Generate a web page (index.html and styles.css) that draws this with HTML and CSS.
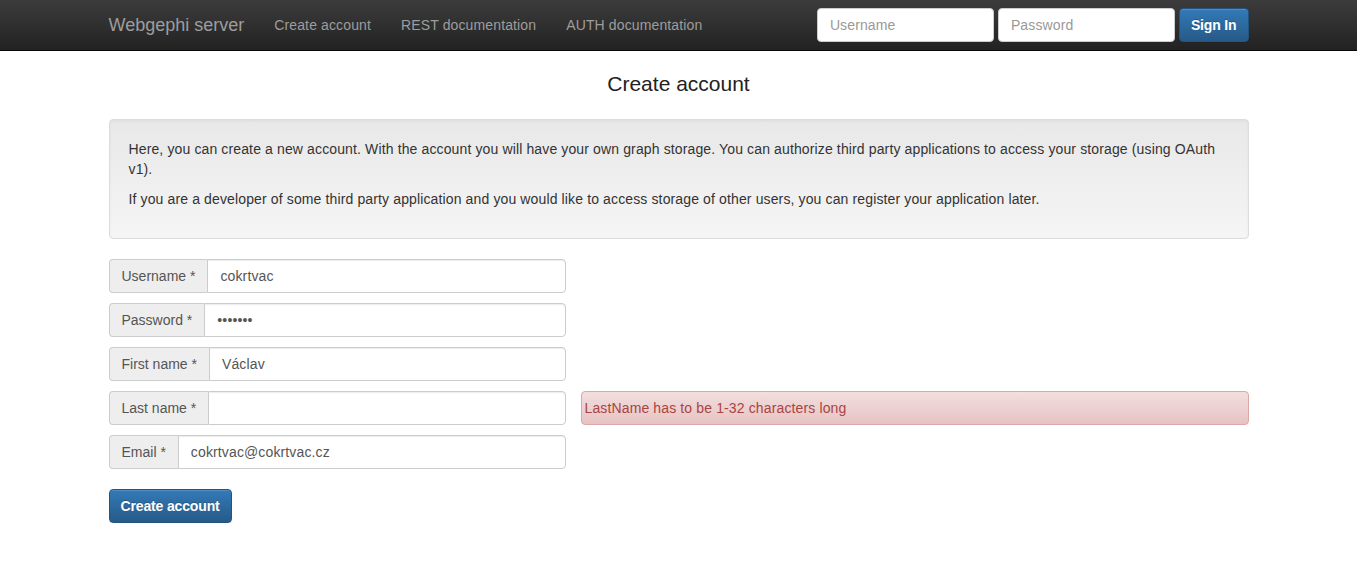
FILE: index.html
```html
<!DOCTYPE html>
<html lang="en">
<head>
<meta charset="utf-8">
<title>Create account - Webgephi server</title>
<link rel="stylesheet" href="styles.css">
</head>
<body>
<nav class="navbar">
  <div class="container nav-inner">
    <a class="brand" href="#">Webgephi server</a>
    <ul class="nav-links">
      <li><a href="#">Create account</a></li>
      <li><a href="#">REST documentation</a></li>
      <li><a href="#">AUTH documentation</a></li>
    </ul>
    <form class="nav-form">
      <input class="nav-input" type="text" placeholder="Username">
      <input class="nav-input" type="password" placeholder="Password">
      <button class="btn btn-primary" type="button">Sign In</button>
    </form>
  </div>
</nav>
<main class="container">
  <h3 class="page-title">Create account</h3>
  <div class="well">
    <p>Here, you can create a new account. With the account you will have your own graph storage. You can authorize third party applications to access your storage (using OAuth v1).</p>
    <p>If you are a developer of some third party application and you would like to access storage of other users, you can register your application later.</p>
  </div>
  <form class="signup">
    <div class="row">
      <div class="input-group">
        <span class="addon">Username *</span>
        <input class="field" type="text" value="cokrtvac">
      </div>
    </div>
    <div class="row">
      <div class="input-group">
        <span class="addon">Password *</span>
        <input class="field" type="password" value="abcdefg">
      </div>
    </div>
    <div class="row">
      <div class="input-group">
        <span class="addon">First name *</span>
        <input class="field" type="text" value="Václav">
      </div>
    </div>
    <div class="row">
      <div class="input-group">
        <span class="addon">Last name *</span>
        <input class="field" type="text" value="">
      </div>
      <div class="alert-danger">LastName has to be 1-32 characters long</div>
    </div>
    <div class="row">
      <div class="input-group">
        <span class="addon">Email *</span>
        <input class="field" type="text" value="cokrtvac@cokrtvac.cz">
      </div>
    </div>
    <div class="actions">
      <button class="btn btn-primary btn-create" type="button">Create account</button>
    </div>
  </form>
</main>
</body>
</html>
```
FILE: styles.css
```css
* { box-sizing: border-box; }
html, body { margin: 0; padding: 0; }
body {
  font-family: "Liberation Sans", Arial, Helvetica, sans-serif;
  font-size: 14px;
  line-height: 20px;
  letter-spacing: 0.13px;
  color: #333;
  background: #fff;
}
.container {
  width: 1170px;
  margin: 0 auto;
  padding: 0 15px;
}
.navbar {
  height: 51px;
  background: linear-gradient(to bottom, #3c3c3c 0, #222 100%);
  border-bottom: 1px solid #080808;
}
.nav-inner {
  display: flex;
  align-items: center;
  height: 50px;
}
.brand {
  color: #9d9d9d;
  font-size: 18px;
  letter-spacing: 0;
  text-decoration: none;
  padding-right: 15px;
  line-height: 50px;
}
.nav-links {
  display: flex;
  list-style: none;
  margin: 0;
  padding: 0;
}
.nav-links a {
  display: block;
  padding: 0 15px;
  line-height: 50px;
  color: #9d9d9d;
  text-decoration: none;
  font-size: 14px;
}
.nav-form {
  margin-left: auto;
  display: flex;
  gap: 4px;
  align-items: center;
}
.nav-input {
  width: 177px;
  height: 34px;
  padding: 6px 12px;
  font-family: inherit;
  font-size: 14px;
  letter-spacing: inherit;
  color: #555;
  background: #fff;
  border: 1px solid #ccc;
  border-radius: 4px;
  outline: none;
}
.nav-input::placeholder { color: #999; }
.btn {
  height: 34px;
  padding: 6px 11px;
  font-family: inherit;
  font-size: 14px;
  font-weight: bold;
  letter-spacing: -0.15px;
  line-height: 20px;
  border-radius: 4px;
  cursor: pointer;
}
.btn-primary {
  color: #fff;
  background: linear-gradient(to bottom, #337ab7 0, #265a88 100%);
  border: 1px solid #245580;
  text-shadow: 0 -1px 0 rgba(0,0,0,.2);
  box-shadow: inset 0 1px 0 rgba(255,255,255,.15), 0 1px 1px rgba(0,0,0,.075);
}
.page-title {
  margin: 21px 0 0;
  height: 47px;
  font-size: 21px;
  font-weight: normal;
  letter-spacing: 0;
  line-height: 24px;
  text-align: center;
  color: #222;
}
.well {
  background: linear-gradient(to bottom, #e8e8e8 0, #f5f5f5 100%);
  border: 1px solid #dcdcdc;
  border-radius: 4px;
  padding: 19px;
  box-shadow: inset 0 1px 3px rgba(0,0,0,.05), 0 1px 0 rgba(255,255,255,.1);
  margin-bottom: 20px;
}
.well p { margin: 0 0 10px; }
.signup { display: flex; flex-direction: column; gap: 10px; }
.row {
  display: flex;
  gap: 15px;
  align-items: center;
}
.input-group {
  display: flex;
  width: 457px;
  height: 34px;
  flex: none;
}
.addon {
  padding: 6px 12px;
  background: #eee;
  border: 1px solid #ccc;
  border-right: 0;
  border-radius: 4px 0 0 4px;
  color: #555;
  white-space: nowrap;
  line-height: 20px;
  letter-spacing: 0;
}
.field {
  flex: 1;
  min-width: 0;
  height: 34px;
  padding: 6px 12px;
  font-family: inherit;
  font-size: 14px;
  letter-spacing: inherit;
  color: #555;
  border: 1px solid #ccc;
  border-radius: 0 4px 4px 0;
  outline: none;
  box-shadow: inset 0 1px 1px rgba(0,0,0,.075);
}
.alert-danger {
  flex: 1;
  height: 34px;
  padding: 6px 3px;
  color: #a94442;
  background: linear-gradient(to bottom, #f2dede 0, #e7c3c3 100%);
  border: 1px solid #dca7a7;
  border-radius: 4px;
  line-height: 20px;
}
.actions { padding-top: 10px; }
.btn-create { padding: 6px 11px; }
```
